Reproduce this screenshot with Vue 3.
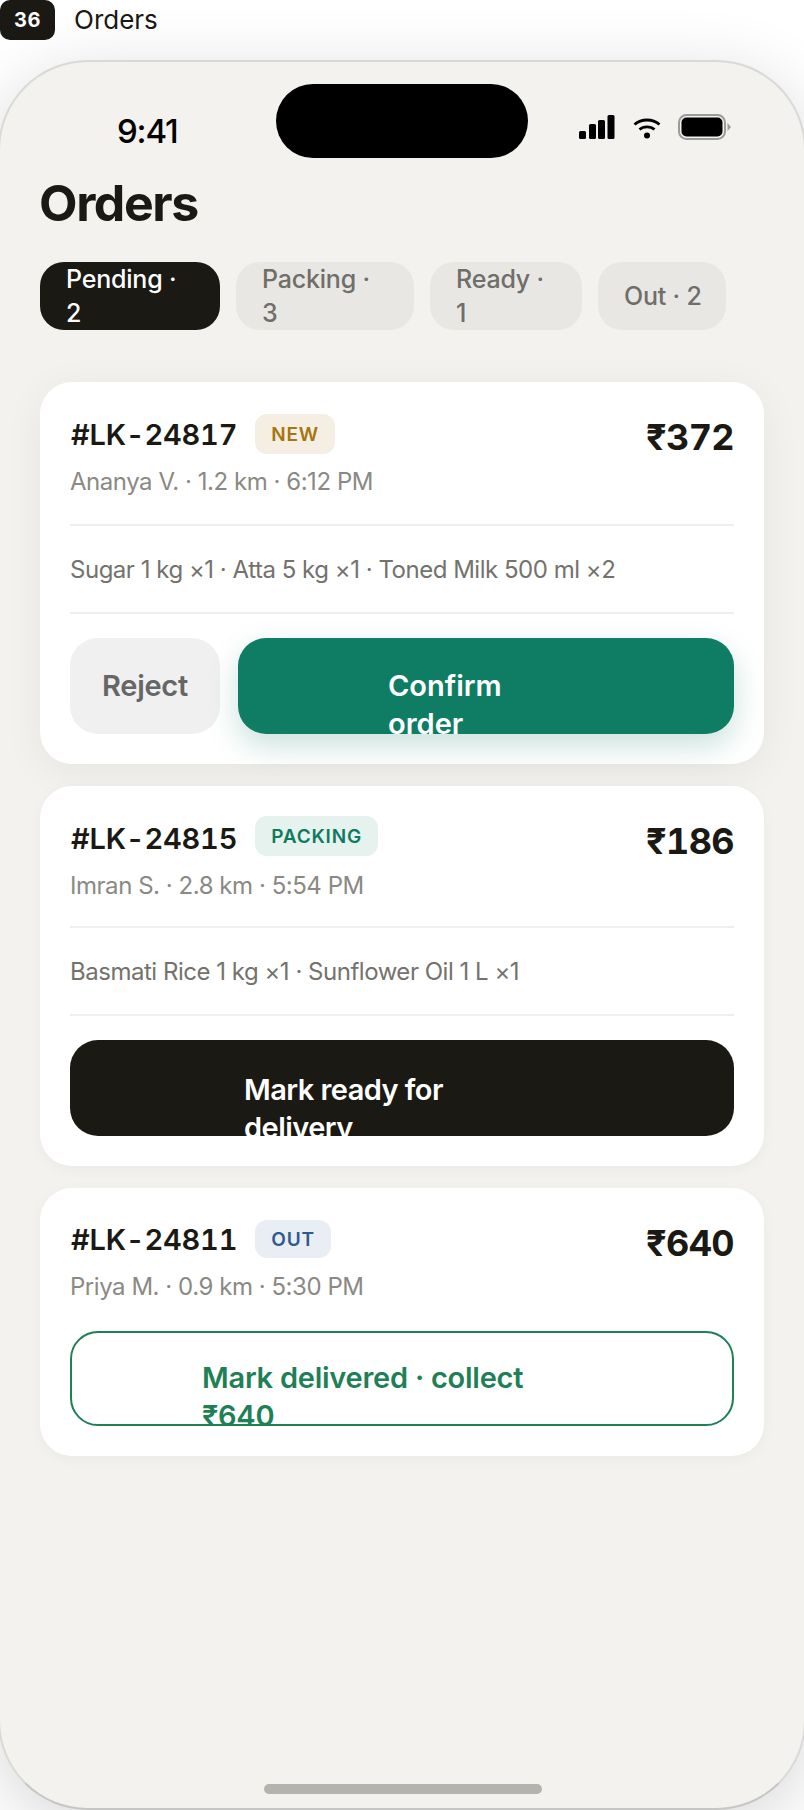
<script setup>
const orders = [
  { id: '#LK-24817', tag: 'NEW', kind: 'new', price: '₹372', meta: 'Ananya V. · 1.2 km · 6:12 PM', items: 'Sugar 1 kg ×1 · Atta 5 kg ×1 · Toned Milk 500 ml ×2' },
  { id: '#LK-24815', tag: 'PACKING', kind: 'packing', price: '₹186', meta: 'Imran S. · 2.8 km · 5:54 PM', items: 'Basmati Rice 1 kg ×1 · Sunflower Oil 1 L ×1' },
  { id: '#LK-24811', tag: 'OUT', kind: 'out', price: '₹640', meta: 'Priya M. · 0.9 km · 5:30 PM', items: '' },
]
const tabs = [
  { label: 'Pending · 2', on: true, w: 180 },
  { label: 'Packing · 3', on: false, w: 178 },
  { label: 'Ready · 1', on: false, w: 152 },
  { label: 'Out · 2', on: false, w: 128 },
]
</script>

<template>
  <div class="page">
    <div class="crumb">
      <span class="count">36</span>
      <span class="crumb-title">Orders</span>
    </div>
    <div class="phone">
      <div class="island"></div>
      <div class="status">
        <span class="clock">9:41</span>
        <div class="icons">
          <svg width="36" height="24" viewBox="0 0 36 24"><rect x="0" y="16" width="7" height="8" rx="1.500"/><rect x="10" y="9" width="7" height="15" rx="1.500"/><rect x="19" y="5" width="7" height="19" rx="1.500"/><rect x="28.500" y="0" width="7" height="24" rx="1.500"/></svg>
          <svg class="wifi" width="28" height="21" viewBox="0 0 28 21" fill="none" stroke="#000" stroke-width="2.800"><path d="M1.500 6.500C8.500 0.500 19.500 0.500 26.500 6.500"/><path d="M6.500 11.500C10.500 8 17.500 8 21.500 11.500"/><circle cx="14" cy="17.500" r="3" fill="#000" stroke="none"/></svg>
          <svg class="batt" width="53" height="26" viewBox="0 0 53 26"><rect x="1" y="1" width="46" height="24" rx="7.500" fill="none" stroke="#9b9b99" stroke-width="2"/><rect x="3.500" y="3.500" width="41" height="19" rx="5"/><path d="M49.500 9 L53 13 L49.500 17Z" fill="#9b9b99"/></svg>
        </div>
      </div>
      <h1 class="title">Orders</h1>
      <div class="tabs">
        <div v-for="t in tabs" :key="t.label" class="tab" :class="{ on: t.on }" :style="{ width: t.w + 'px' }"><span>{{ t.label }}</span></div>
      </div>
      <div class="list">
        <section v-for="o in orders" :key="o.id" class="card" :class="'card-' + o.kind">
          <div class="head">
            <div>
              <div class="idline">
                <span class="oid">{{ o.id }}</span>
                <span class="tag" :class="o.kind">{{ o.tag }}</span>
              </div>
              <div class="meta">{{ o.meta }}</div>
            </div>
            <div class="price">{{ o.price }}</div>
          </div>
          <div v-if="o.items" class="items">{{ o.items }}</div>
          <div class="actions">
            <template v-if="o.kind === 'new'">
              <div class="btn reject"><span>Reject</span></div>
              <div class="btn confirm"><span class="lbl">Confirm order</span></div>
            </template>
            <div v-else-if="o.kind === 'packing'" class="btn ready"><span class="lbl">Mark ready for delivery</span></div>
            <div v-else class="btn deliver"><span class="lbl">Mark delivered · collect ₹640</span></div>
          </div>
        </section>
      </div>
      <div class="home"></div>
    </div>
  </div>
</template>

<style>
html, body { margin: 0; background: #fff; }
</style>

<style scoped>
.page {
  width: 804px;
  height: 1810px;
  overflow: hidden;
  background: #fff;
  font-family: "Inter", "Noto Sans", sans-serif;
  color: #1a1914;
}
.crumb { display: flex; align-items: center; gap: 19px; height: 40px; }
.count {
  width: 55px; height: 40px;
  background: #1a1914; color: #fff; border-radius: 10px;
  display: flex; align-items: center; justify-content: center;
  font-size: 20px; font-weight: 700; letter-spacing: .5px;
}
.crumb-title { font-size: 26px; padding-bottom: 2px; }
.phone {
  position: relative;
  margin: 20px 0 0 -2px;
  width: 808px;
  height: 1750px;
  box-sizing: border-box;
  border: 2px solid #d9d9d7;
  border-bottom-color: #c6c6c4;
  border-radius: 90px;
  background: #f3f2ee;
  box-shadow: 0 16px 70px rgba(0,0,0,.16);
  overflow: hidden;
}
.island { position: absolute; left: 276px; top: 22px; width: 252px; height: 74px; border-radius: 37px; background: #000; }
.status { height: 98px; box-sizing: border-box; display: flex; justify-content: space-between; align-items: flex-start; padding: 49px 73px 0 117px; }
.clock { font-size: 33px; line-height: 40px; font-weight: 500; letter-spacing: -1.2px; color: #000; }
.icons { display: flex; align-items: center; gap: 0; margin-top: 3px; }
.wifi { margin-left: 18px; margin-top: 3px; }
.batt { margin-left: 17px; }
.title { margin: 13px 0 0 39px; font-size: 50px; line-height: 60px; font-weight: 700; letter-spacing: -1.4px; }
.tabs { display: flex; gap: 16px; margin: 29px 0 0 40px; }
.tab {
  height: 68px; box-sizing: border-box; padding: 0 26px;
  background: #e8e7e3; color: #6f6e69; border-radius: 24px;
  display: flex; align-items: center;
  font-size: 25px; line-height: 34px; font-weight: 500; letter-spacing: -.2px;
}
.tab:last-child span { white-space: nowrap; }
.tab.on { background: #1a1914; color: #fff; }
.list { margin: 52px 40px 0; display: flex; flex-direction: column; gap: 22px; }
.card {
  background: #fff; border-radius: 32px; padding: 30px;
  box-shadow: 0 3px 14px rgba(0,0,0,.04);
}
.card-new { box-shadow: 0 8px 40px rgba(0,0,0,.06); }
.head { display: flex; justify-content: space-between; align-items: flex-start; }
.idline { display: flex; align-items: center; gap: 18px; height: 44px; }
.card-out .idline { height: 42px; }
.oid { font-size: 29px; font-weight: 600; letter-spacing: -.2px; margin-left: 1px; font-variant-numeric: tabular-nums; }
.tag { height: 40px; display: flex; align-items: center; padding: 0 16px; border-radius: 12px; font-size: 19px; font-weight: 600; letter-spacing: .8px; }
.tag.new { background: #f5eee2; color: #a8740f; }
.tag.packing { background: #e6f2ee; color: #0f7a5f; margin-bottom: 4px; }
.tag.out { height: 38px; background: #e9eef4; color: #2e5a8f; }
.meta { margin-top: 9px; font-size: 24px; line-height: 34px; letter-spacing: -.46px; color: #8a8984; }
.card-out .meta { margin-top: 10px; }
.price { font-size: 36px; line-height: 44px; font-weight: 700; margin-top: 3px; letter-spacing: -.6px; font-variant-numeric: tabular-nums; }
.items {
  margin-top: 25px; height: 90px; box-sizing: border-box;
  display: flex; align-items: center;
  border-top: 2px solid #efefef; border-bottom: 2px solid #efefef;
  font-size: 24px; letter-spacing: -.48px; color: #73726d;
}
.card-packing .items { margin-top: 23px; }
.actions { display: flex; gap: 18px; margin-top: 24px; }
.card-out .actions { margin-top: 27px; }
.btn {
  height: 96px; box-sizing: border-box; border-radius: 28px; overflow: hidden;
  font-size: 29px; line-height: 37.500px; font-weight: 600;
}
.btn.reject { width: 150px; background: #f0f0f0; color: #666; display: flex; align-items: center; justify-content: center; letter-spacing: -.3px; }
.confirm { flex: 1; background: #0f7d63; color: #fff; padding: 29px 0 0 150px; box-shadow: 0 12px 30px rgba(15,125,99,.22); }
.confirm .lbl { display: block; width: 180px; }
.ready { flex: 1; background: #1a1914; color: #fff; padding: 31px 0 0 174px; letter-spacing: -.55px; }
.ready .lbl { display: block; width: 240px; }
.deliver { flex: 1; height: 95px; background: #fff; color: #1f7f57; border: 2px solid #1f7f57; padding: 26px 0 0 130px; letter-spacing: -.25px; }
.deliver .lbl { display: block; width: 340px; }
.home { position: absolute; left: 264px; bottom: 14px; width: 278px; height: 10px; border-radius: 5px; background: #b5b3ae; }
</style>
